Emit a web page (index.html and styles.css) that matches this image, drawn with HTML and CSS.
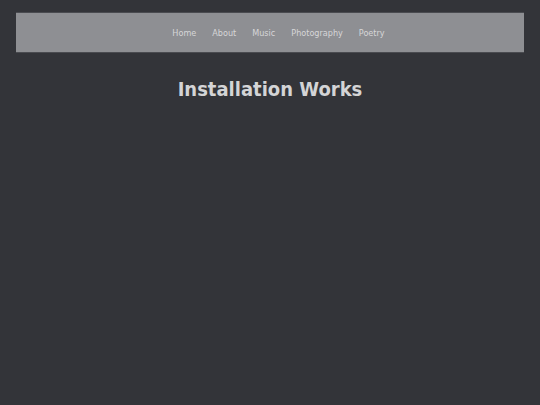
FILE: index.html
```html
<!DOCTYPE html>
<html>
<head>
<meta charset="utf-8">
<link rel="stylesheet" href="styles.css">
</head>
<body>
<header class="site-header">
  <nav class="nav">
    <a href="#">Home</a>
    <a href="#">About</a>
    <a href="#">Music</a>
    <a href="#">Photography</a>
    <a href="#">Poetry</a>
  </nav>
</header>
<main class="content">
  <h1 class="title">Installation Works</h1>
</main>
</body>
</html>
```

FILE: styles.css
```css
html, body {
  margin: 0;
  padding: 0;
  background: #333439;
  font-family: "DejaVu Sans Condensed", "DejaVu Sans", sans-serif;
}
body {
  padding: 12px 16px;
}
.site-header {
  background: #8e8f93;
  border-top: 1px solid #4a4b50;
  border-bottom: 1px solid #4a4b50;
  height: 39px;
  display: flex;
  align-items: center;
  justify-content: center;
}
.nav {
  display: flex;
  gap: 16px;
  font-size: 9px;
  padding-top: 1px;
  padding-left: 17px;
}
.nav a {
  color: #d6d6d8;
  text-decoration: none;
}
.content {
  text-align: center;
}
.title {
  margin: 24px 0 0;
  font-size: 20px;
  font-weight: bold;
  color: #d4d4d6;
}
```
